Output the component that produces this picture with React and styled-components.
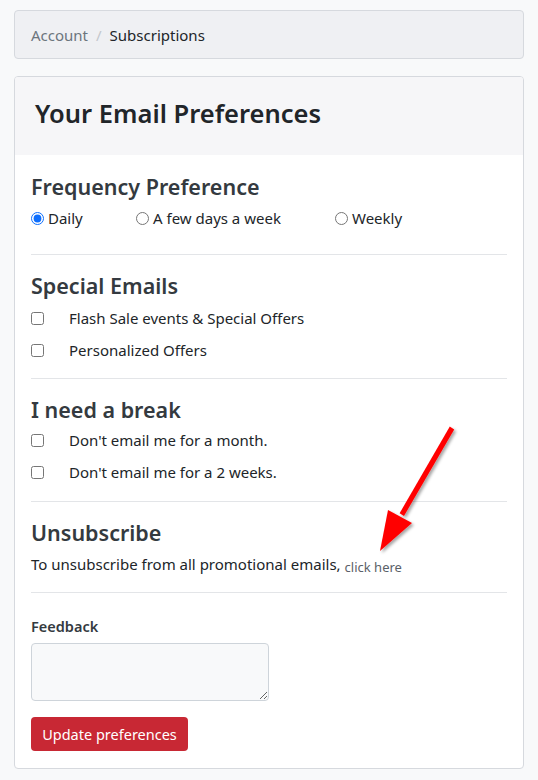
import React from "react";
import styled, { createGlobalStyle } from "styled-components";

const Global = createGlobalStyle`
  html, body { margin: 0; padding: 0; background: #f8f9fa; }
  body { font-family: "Noto Sans", "Open Sans", sans-serif; color: #212529; }
  * { box-sizing: border-box; }
`;

const Page = styled.div`
  position: relative;
  padding: 10px 14px 12px;
  width: 538px;
`;

const Breadcrumb = styled.nav`
  display: flex;
  align-items: center;
  height: 49px;
  padding: 0 16px;
  background: #eff0f3;
  border: 1px solid #d6d9de;
  border-radius: 4px;
  font-size: 15px;
  margin-bottom: 17px;
`;

const Crumb = styled.span`
  color: ${(p) => (p.$active ? "#212529" : "#6c757d")};
`;

const Sep = styled.span`
  color: #c3c7cc;
  padding: 0 8px;
`;

const Card = styled.section`
  background: #fff;
  border: 1px solid #d6d9de;
  border-radius: 4px;
  overflow: hidden;
`;

const CardHeader = styled.header`
  height: 78px;
  display: flex;
  align-items: center;
  padding: 0 20px 7px;
  background: #f6f6f8;
`;

const Title = styled.h1`
  margin: 0;
  font-size: 25.5px;
  font-weight: 600;
  color: #212529;
`;

const CardBody = styled.div`
  padding: 17px 16px 17px;
`;

const SectionTitle = styled.h2`
  margin: 0 0 ${(p) => p.$mb ?? 5}px;
  font-size: 21.5px;
  line-height: 29px;
  font-weight: 600;
  color: #343a40;
`;

const Divider = styled.hr`
  border: 0;
  border-top: 1px solid #e3e5e8;
  margin: ${(p) => p.$top ?? 16}px 0 16px;
`;

const RadioGroup = styled.div`
  display: flex;
  align-items: center;
  height: 24px;
`;

const RadioLabel = styled.label`
  display: flex;
  align-items: center;
  width: ${(p) => p.$w}px;
  font-size: 15px;
  gap: 4px;
  input { margin: 0; width: 13px; height: 13px; accent-color: #0d6efd; }
`;

const CheckRow = styled.label`
  display: flex;
  align-items: center;
  height: 24px;
  margin-top: ${(p) => (p.$first ? 0 : 8)}px;
  font-size: 15px;
  gap: 25px;
  input { margin: 0; width: 13px; height: 13px; }
`;

const Text = styled.p`
  margin: 0;
  height: 24px;
  line-height: 24px;
  font-size: 15px;
  color: #212529;
`;

const SmallLink = styled.a`
  font-size: 13px;
  color: #5a6168;
  text-decoration: none;
  margin-left: 4px;
  position: relative;
  top: 2px;
`;

const FieldLabel = styled.label`
  display: block;
  margin-top: 22px;
  font-size: 14.5px;
  line-height: 22px;
  font-weight: 600;
  color: #343a40;
`;

const TextArea = styled.textarea`
  display: block;
  margin-top: 6px;
  width: 238px;
  height: 58px;
  background: #f8f9fa;
  border: 1px solid #ced4da;
  border-radius: 4px;
`;

const Button = styled.button`
  margin-top: 16px;
  height: 34px;
  width: 157px;
  border: 0;
  border-radius: 4px;
  background: #c82834;
  color: #fff;
  font-family: inherit;
  font-size: 14.5px;
  padding: 0;
`;

const Arrow = styled.svg`
  position: absolute;
  left: 370px;
  top: 420px;
  overflow: visible;
  pointer-events: none;
`;

export default function App() {
  return (
    <Page>
      <Global />
      <Breadcrumb>
        <Crumb>Account</Crumb>
        <Sep>/</Sep>
        <Crumb $active>Subscriptions</Crumb>
      </Breadcrumb>
      <Card>
        <CardHeader>
          <Title>Your Email Preferences</Title>
        </CardHeader>
        <CardBody>
          <SectionTitle $mb={5}>Frequency Preference</SectionTitle>
          <RadioGroup>
            <RadioLabel $w={105}>
              <input type="radio" name="freq" defaultChecked />
              Daily
            </RadioLabel>
            <RadioLabel $w={199}>
              <input type="radio" name="freq" />
              A few days a week
            </RadioLabel>
            <RadioLabel $w={120}>
              <input type="radio" name="freq" />
              Weekly
            </RadioLabel>
          </RadioGroup>
          <Divider $top={24} />

          <SectionTitle $mb={6}>Special Emails</SectionTitle>
          <CheckRow $first>
            <input type="checkbox" />
            Flash Sale events &amp; Special Offers
          </CheckRow>
          <CheckRow>
            <input type="checkbox" />
            Personalized Offers
          </CheckRow>
          <Divider />

          <SectionTitle $mb={4}>I need a break</SectionTitle>
          <CheckRow $first>
            <input type="checkbox" />
            Don't email me for a month.
          </CheckRow>
          <CheckRow>
            <input type="checkbox" />
            Don't email me for a 2 weeks.
          </CheckRow>
          <Divider $top={17} />

          <SectionTitle $mb={5}>Unsubscribe</SectionTitle>
          <Text>
            To unsubscribe from all promotional emails,
            <SmallLink href="#">click here</SmallLink>
          </Text>
          <Divider />

          <FieldLabel htmlFor="fb">Feedback</FieldLabel>
          <TextArea id="fb" />
          <Button>Update preferences</Button>
        </CardBody>
      </Card>
      <Arrow width="90" height="135" viewBox="0 0 90 135">
        <defs>
          <filter id="sh" x="-30%" y="-30%" width="160%" height="160%">
            <feDropShadow dx="2" dy="2" stdDeviation="1.5" floodColor="#000" floodOpacity="0.35" />
          </filter>
        </defs>
        <g filter="url(#sh)" fill="#ff0000">
          <polygon points="79.8,6.6 84.2,9.4 34,96 29.6,93.2" />
          <polygon points="18,90 42,103 10,131" />
        </g>
      </Arrow>
    </Page>
  );
}
